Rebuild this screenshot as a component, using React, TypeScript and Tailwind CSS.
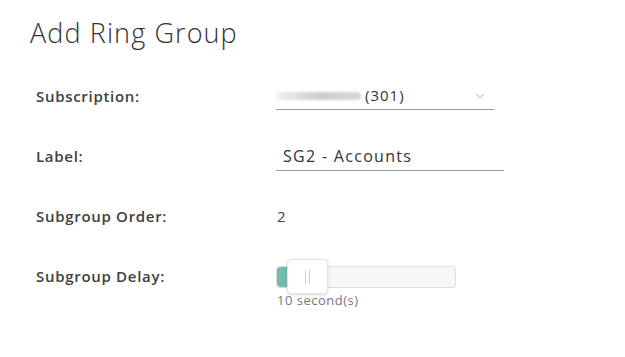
import React from 'react';
import { ChevronDown } from 'lucide-react';

const font = { fontFamily: '"Open Sans", "Noto Sans", sans-serif' };

function Label({ children, className = '' }: { children: React.ReactNode; className?: string }) {
    return (
        <div className={`w-[276px] shrink-0 pl-[36px] text-[15px] font-semibold text-[#404040] tracking-[0.7px] ${className}`}>
            {children}
        </div>
    );
}

function Row({ label, children }: { label: string; children: React.ReactNode }) {
    return (
        <div className="flex items-center h-[60px]">
            <Label>{label}</Label>
            <div className="flex-1">{children}</div>
        </div>
    );
}

export default function App() {
    return (
        <div className="w-[625px] h-[357px] bg-white" style={font}>
            <h1 className="pl-[30px] pt-[16px] text-[27px] font-light text-[#333] leading-[34px] tracking-[1.1px]">
                Add Ring Group
            </h1>

            <div className="flex flex-col mt-[16px]">
                {/* Subscription */}
                <Row label="Subscription:">
                    <div className="w-[218px] h-[28px] border-b border-[#9a9a9a] flex items-center relative">
                        <div className="w-[85px] h-[8px] rounded-sm bg-gradient-to-r from-[#f2f2f2] via-[#cdcdcd] to-[#d8d8d8] blur-[0.8px]" />
                        <span className="ml-[4px] text-[15px] text-[#333] tracking-[1px]">(301)</span>
                        <ChevronDown className="absolute right-[7px] w-[14px] h-[14px] text-[#888]" strokeWidth={1.25} />
                    </div>
                </Row>

                {/* Label */}
                <Row label="Label:">
                    <div className="w-[228px] h-[30px] border-b border-[#9a9a9a] flex items-center pl-[7px] text-[16px] text-[#333] tracking-[1.3px]">
                        SG2 - Accounts
                    </div>
                </Row>

                <Row label="Subgroup Order:">
                    <span className="pl-[1px] text-[15px] text-[#444]">2</span>
                </Row>

                {/* Delay slider */}
                <div className="flex items-start h-[60px]">
                    <Label className="pt-[20px] leading-[20px]">Subgroup Delay:</Label>
                    <div className="flex flex-col pt-[20px]">
                        <div className="relative w-[180px] h-[22px] rounded-[4px] border border-[#dedede] bg-[#f7f7f7]">
                            <div className="absolute left-0 top-0 bottom-0 w-[16px] rounded-l-[4px] bg-[#72bcad]" />
                            <div className="absolute left-[10px] top-[-8px] w-[41px] h-[35px] rounded-[4px] bg-white border border-[#e4e4e4] shadow-[0_1px_3px_rgba(0,0,0,0.15)] flex items-center justify-center gap-[3px]">
                                <div className="w-px h-[14px] bg-[#cfcfcf]" />
                                <div className="w-px h-[14px] bg-[#cfcfcf]" />
                            </div>
                        </div>
                        <span className="pl-[1px] pt-[3px] text-[13px] leading-[18px] text-[#777] tracking-[0.5px]">10 second(s)</span>
                    </div>
                </div>
            </div>
        </div>
    );
}
